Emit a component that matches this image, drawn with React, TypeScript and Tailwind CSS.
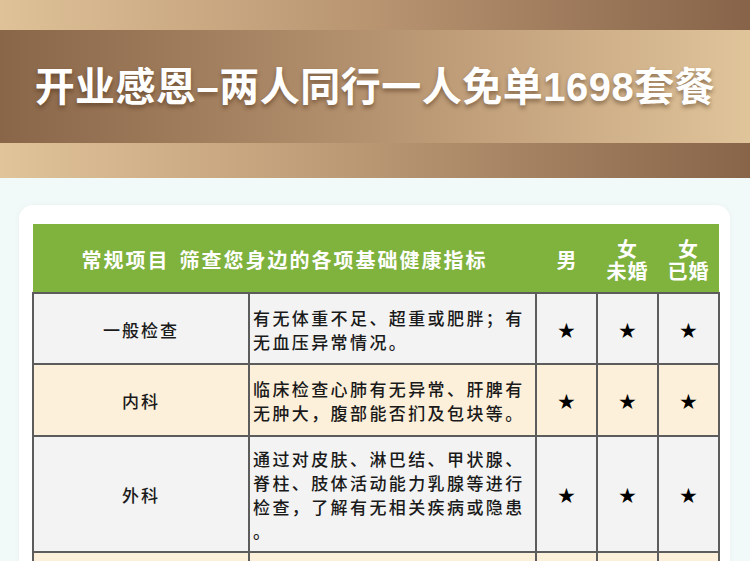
const FONT = "font-['Liberation_Sans','Noto_Sans_CJK_SC',sans-serif]";

type Row = {
	name: string;
	lines: string[];
	bg: string;
	h: string;
};

const ROWS: Row[] = [
	{
		name: "一般检查",
		lines: ["有无体重不足、超重或肥胖；有", "无血压异常情况。"],
		bg: "bg-[#f3f3f3]",
		h: "h-[71px]",
	},
	{
		name: "内科",
		lines: ["临床检查心肺有无异常、肝脾有", "无肿大，腹部能否扪及包块等。"],
		bg: "bg-[#fdf0da]",
		h: "h-[72px]",
	},
	{
		name: "外科",
		lines: ["通过对皮肤、淋巴结、甲状腺、", "脊柱、肢体活动能力乳腺等进行", "检查，了解有无相关疾病或隐患", "。"],
		bg: "bg-[#f3f3f3]",
		h: "h-[116px]",
	},
];

const CELL = "border-2 border-[#5c5c5c] pt-[6px]";

function Star() {
	return <span className="font-['DejaVu_Sans',sans-serif] text-[21px] text-black">★</span>;
}

export default function App() {
	return (
		<div className={`min-h-[561px] w-[750px] overflow-hidden bg-[#f1faf8] ${FONT}`}>
			{/* Banner */}
			<div className="h-[30px] bg-linear-to-r from-[#dfc298] via-[#b89471] to-[#876449]" />
			<div className="flex h-[113px] items-center justify-center bg-linear-to-r from-[#896648] via-[#b69370] to-[#e0c49a]">
				<h1 className="text-[40px] font-bold tracking-[0.5px] text-white [text-shadow:0_3px_4px_rgba(60,35,15,0.45)]">
					开业感恩–两人同行一人免单1698套餐
				</h1>
			</div>
			<div className="h-[35px] bg-linear-to-r from-[#e1c49a] via-[#b99672] to-[#886549]" />

			{/* Card */}
			<div className="ml-[19px] mt-[27px] w-[711px] rounded-[14px] bg-white px-[13px] pt-[19px] pb-4 shadow-[0_0_6px_rgba(0,0,0,0.04)]">
				<table className="w-[686px] table-fixed border-collapse">
					<colgroup>
						<col className="w-[216px]" />
						<col className="w-[287px]" />
						<col className="w-[61px]" />
						<col className="w-[61px]" />
						<col className="w-[61px]" />
					</colgroup>
					<thead>
						<tr className="h-[69px] bg-[#80b23e] text-white">
							<th colSpan={2} className="pt-[6px] text-[20px] font-bold tracking-[2px]">
								常规项目<span className="ml-[10px]">筛查您身边的各项基础健康指标</span>
							</th>
							<th className="pt-[6px] text-[20px] font-bold">男</th>
							<th className="pt-[6px] text-[20px] font-bold leading-[22px] tracking-[1px]">
								女
								<br />
								未婚
							</th>
							<th className="pt-[6px] text-[20px] font-bold leading-[22px] tracking-[1px]">
								女
								<br />
								已婚
							</th>
						</tr>
					</thead>
					<tbody>
						{ROWS.map((row) => (
							<tr key={row.name} className={`${row.bg} ${row.h}`}>
								<td className={`${CELL} text-center text-[17px] font-medium tracking-[2px] text-[#1a1a1a]`}>
									{row.name}
								</td>
								<td className={`${CELL} pl-[3px] text-[17px] font-medium leading-[24px] tracking-[2.4px] whitespace-nowrap text-[#1a1a1a]`}>
									{row.lines.map((l, i) => (
										<div key={i}>{l}</div>
									))}
								</td>
								<td className={`${CELL} text-center`}>
									<Star />
								</td>
								<td className={`${CELL} text-center`}>
									<Star />
								</td>
								<td className={`${CELL} text-center`}>
									<Star />
								</td>
							</tr>
						))}
						{/* next row, only its top edge is in view */}
						<tr className="h-[72px] bg-[#fdf0da]">
							<td className={CELL} />
							<td className={CELL} />
							<td className={CELL} />
							<td className={CELL} />
							<td className={CELL} />
						</tr>
					</tbody>
				</table>
			</div>
		</div>
	);
}
